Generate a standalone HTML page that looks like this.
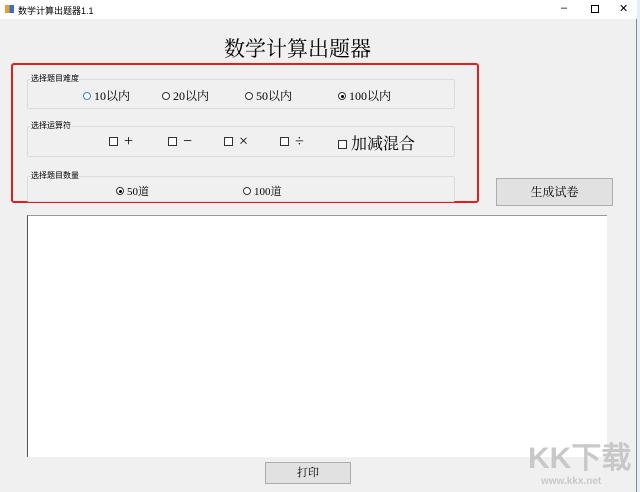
<!DOCTYPE html>
<html><head><meta charset="utf-8"><style>
*{margin:0;padding:0;box-sizing:border-box}
body{width:640px;height:492px;overflow:hidden;background:#e8eef4;font-family:"Liberation Serif","Noto Serif CJK SC",serif;position:relative}
.win{position:absolute;left:0;top:0;width:637px;height:492px;background:#f0f0f0;border-right:1px solid #888}
.title{position:absolute;left:0;top:0;width:637px;height:19px;background:#fff;font:9px "Liberation Sans","Noto Sans CJK SC",sans-serif;color:#000}
.a{position:absolute;white-space:nowrap}
.grp{position:absolute;left:27px;width:428px;border:1px solid #dcdcdc;border-radius:2px}
.lbl{position:absolute;font:8px "Liberation Sans","Noto Sans CJK SC",sans-serif;color:#000;background:#f0f0f0}
.rad{display:inline-block;width:8px;height:8px;border:1px solid #333;border-radius:50%;vertical-align:middle;margin-right:3px;position:relative;top:-1px;background:#fff}
.rad.on::after{content:"";position:absolute;left:1.5px;top:1.5px;width:3px;height:3px;border-radius:50%;background:#000}
.chk{display:inline-block;width:9px;height:9px;border:1px solid #333;vertical-align:middle;margin-right:6px;position:relative;top:-1px;background:#fff}
.btn{position:absolute;background:#e1e1e1;border:1px solid #adadad;text-align:center;font-size:12px}
</style></head><body>
<div class="win">
<div class="title">
<div class="a" style="left:5px;top:5px;width:9px;height:8px;background:linear-gradient(90deg,#e8a030 50%,#3a6ec8 50%)"></div>
<div class="a" style="left:18px;top:4px">数学计算出题器1.1</div>
<div class="a" style="left:561px;top:2px;font-size:11px">–</div>
<div class="a" style="left:591px;top:5px;width:8px;height:8px;border:1px solid #000"></div>
<div class="a" style="left:619px;top:2px;font-size:11px">✕</div>
</div>
<div class="a" style="left:224px;top:33px;font-size:21px;color:#000">数学计算出题器</div>
<div class="a" style="left:11px;top:63px;width:468px;height:140px;border:2px solid #e02020;border-radius:3px"></div>
<div class="grp" style="top:79px;height:30px"></div>
<div class="lbl" style="left:31px;top:73px">选择题目难度</div>
<div class="a" style="left:83px;top:87px;font-size:12px"><span class="rad" style="border-color:#3c82d2"></span>10以内</div>
<div class="a" style="left:162px;top:87px;font-size:12px"><span class="rad"></span>20以内</div>
<div class="a" style="left:245px;top:87px;font-size:12px"><span class="rad"></span>50以内</div>
<div class="a" style="left:338px;top:87px;font-size:12px"><span class="rad on"></span>100以内</div>
<div class="grp" style="top:126px;height:31px"></div>
<div class="lbl" style="left:31px;top:120px">选择运算符</div>
<div class="a" style="left:109px;top:133px;font-size:16px"><span class="chk"></span>+</div>
<div class="a" style="left:168px;top:133px;font-size:16px"><span class="chk"></span>−</div>
<div class="a" style="left:224px;top:133px;font-size:16px"><span class="chk"></span>×</div>
<div class="a" style="left:280px;top:133px;font-size:16px"><span class="chk"></span>÷</div>
<div class="a" style="left:338px;top:131px;font-size:16px"><span class="chk" style="margin-right:4px"></span>加减混合</div>
<div class="grp" style="top:176px;height:26px"></div>
<div class="lbl" style="left:31px;top:170px">选择题目数量</div>
<div class="a" style="left:116px;top:183px;font-size:11px"><span class="rad on"></span>50道</div>
<div class="a" style="left:243px;top:183px;font-size:11px"><span class="rad"></span>100道</div>
<div class="btn" style="left:496px;top:178px;width:117px;height:28px;line-height:26px">生成试卷</div>
<div class="a" style="left:27px;top:215px;width:580px;height:242px;background:#fff;border-left:1px solid #555;border-top:1px solid #999"></div>
<div class="btn" style="left:265px;top:462px;width:86px;height:22px;line-height:20px;font-size:11px">打印</div>
<div class="a" style="left:528px;top:433px;font:bold 30px 'Liberation Sans',sans-serif;color:#c8c8c8">KK下载</div>
<div class="a" style="left:541px;top:476px;font:bold 10px 'Liberation Sans',sans-serif;color:#c8c8c8">www.kkx.net</div>
</div>
</body></html>
